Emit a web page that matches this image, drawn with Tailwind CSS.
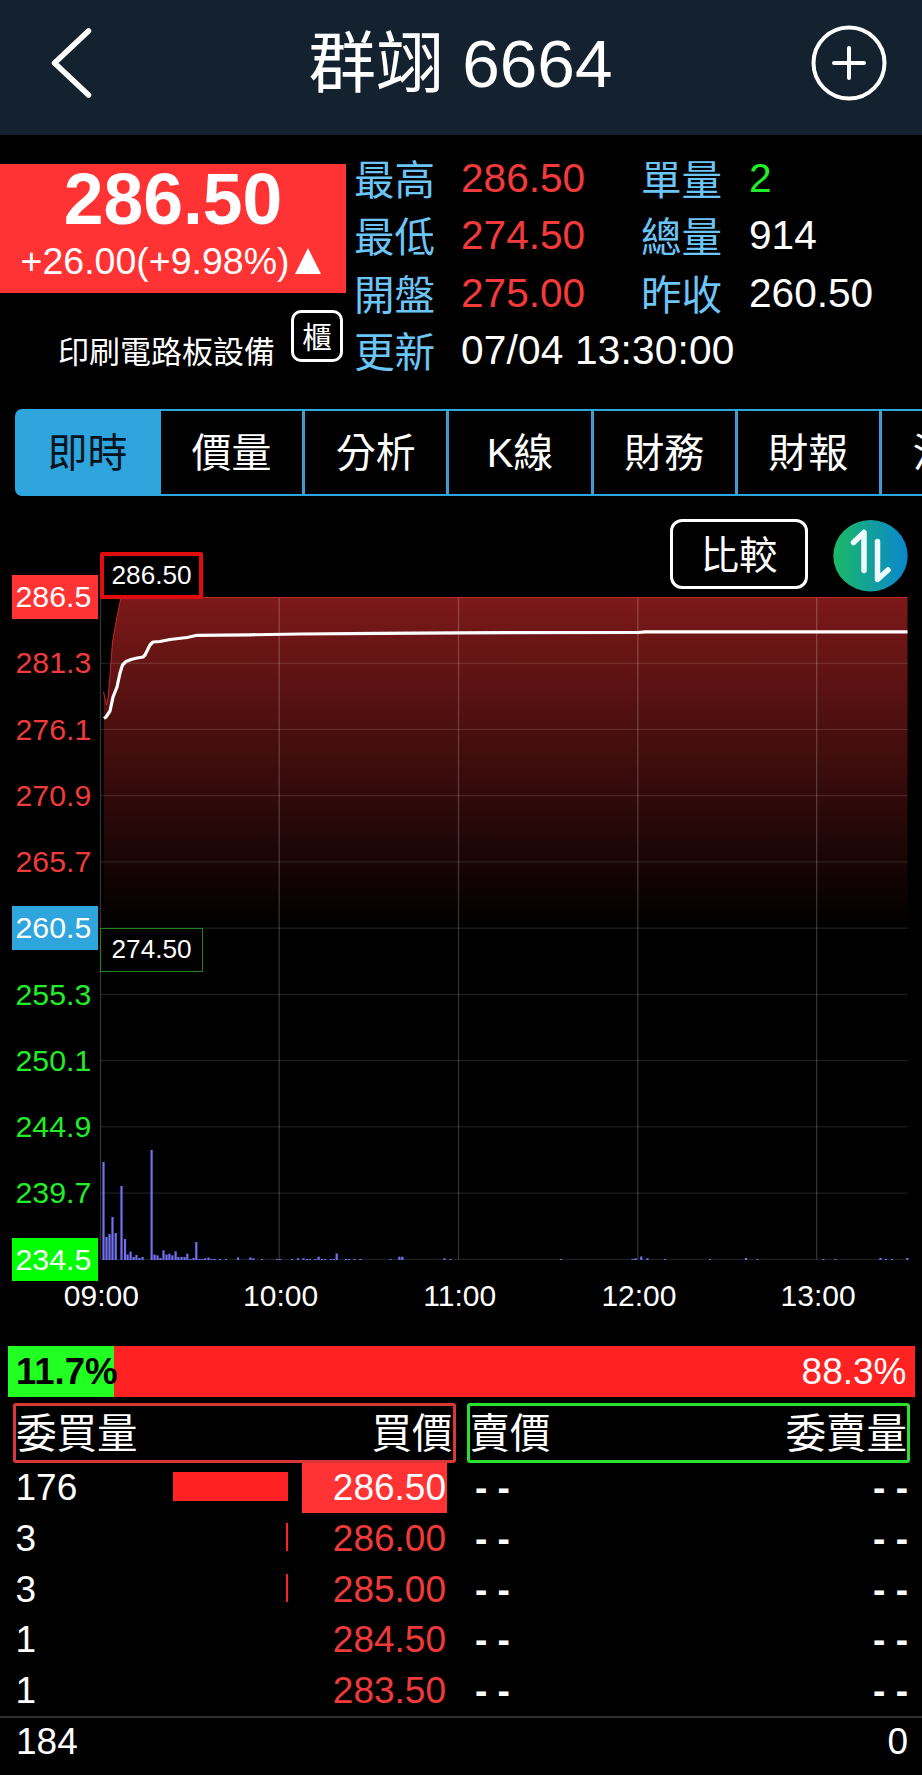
<!DOCTYPE html>
<html lang="zh-Hant">
<head>
  <meta charset="UTF-8" />
  <title>群翊 6664</title>
  <script src="https://cdn.jsdelivr.net/npm/@tailwindcss/browser@4"></script>
</head>
<body class="bg-black text-white w-[922px] h-[1775px] overflow-hidden font-['Liberation_Sans','Noto_Sans_CJK_TC',sans-serif]">
  <header class="h-[135px] bg-[#13222e] flex items-center justify-between pl-[46px] pr-[35px] pb-[10px]">
    <svg class="w-[76px] h-[76px]" viewBox="0 0 76 76" fill="none" stroke="white" stroke-width="5.500" stroke-linecap="round" stroke-linejoin="round">
      <path d="M42.500 6 L8.500 38 L42.500 70" />
    </svg>
    <h1 class="text-[67.500px] leading-[80px] whitespace-nowrap pt-[2px] pr-[12px]">群翊 6664</h1>
    <svg class="w-[76px] h-[76px]" viewBox="0 0 76 76" fill="none" stroke="white" stroke-width="4" stroke-linecap="round">
      <circle cx="38" cy="38" r="35.500" />
      <path d="M38 23 V53 M23 38 H53" />
    </svg>
  </header>

  <section class="h-[274px] flex pt-[14px]">
    <div class="w-[346px] mr-[8px] pt-[15px]">
      <div class="h-[129px] bg-[#ff3333] text-center">
        <div class="text-[71.500px] leading-[70px] font-bold">286.50</div>
        <div class="flex justify-center items-center text-[37.500px] leading-[54px] pr-[4px]">
          <span>+26.00(+9.98%)</span>
          <svg class="w-[26px] h-[26px] ml-[6px]" viewBox="0 0 26 26"><path d="M13 0 L26 26 H0 Z" fill="white" /></svg>
        </div>
      </div>
      <div class="flex justify-end pr-[3px] pt-[17px]">
        <span class="text-[31px] leading-[52px] pt-[17px] mr-[16px]">印刷電路板設備</span>
        <span class="w-[52px] h-[52px] border-3 border-white rounded-[10px] text-[29.500px] leading-[49px] text-center">櫃</span>
      </div>
    </div>
    <div class="grid grid-cols-[107px_180px_108px_160px] auto-rows-[57.400px] text-[40.600px] leading-[58px] whitespace-nowrap">
      <span class="text-[#6cc5f7] pt-[3px]">最高</span><span class="text-[#f43a3a]">286.50</span>
      <span class="text-[#6cc5f7] pt-[3px]">單量</span><span class="text-[#1fef25]">2</span>
      <span class="text-[#6cc5f7] pt-[3px]">最低</span><span class="text-[#f43a3a]">274.50</span>
      <span class="text-[#6cc5f7] pt-[3px]">總量</span><span>914</span>
      <span class="text-[#6cc5f7] pt-[3px]">開盤</span><span class="text-[#f43a3a]">275.00</span>
      <span class="text-[#6cc5f7] pt-[3px]">昨收</span><span>260.50</span>
      <span class="text-[#6cc5f7] pt-[3px]">更新</span><span class="col-span-3 tracking-[0.200px]">07/04 13:30:00</span>
    </div>
  </section>

  <nav class="ml-[15px] h-[87px] w-[1010px] flex border-2 border-[#2fa5dd] rounded-[7px] text-[40px] leading-[85px] text-center">
    <a class="w-[144px] shrink-0 bg-[#2fa5dd] text-[#04131d] pr-[3px]">即時</a>
    <a class="w-[144.200px] shrink-0 border-r-3 border-[#3f9dd0]">價量</a>
    <a class="w-[144.200px] shrink-0 border-r-3 border-[#3f9dd0]">分析</a>
    <a class="w-[144.200px] shrink-0 border-r-3 border-[#3f9dd0]">K線</a>
    <a class="w-[144.200px] shrink-0 border-r-3 border-[#3f9dd0]">財務</a>
    <a class="w-[144.200px] shrink-0 border-r-3 border-[#3f9dd0]">財報</a>
    <a class="w-[144.200px] shrink-0 pr-[3px]">法人</a>
  </nav>

  <section class="h-[766px] flex">
    <!-- price axis -->
    <div class="w-[98px] pl-[11.500px] pt-[79px] h-[785px] flex flex-col justify-between text-[30.300px] leading-[43.500px] *:h-[43.500px] *:pl-[4px]">
      <div class="bg-[#ff3333]">286.5</div>
      <div class="text-[#ee3b3b]">281.3</div>
      <div class="text-[#ee3b3b]">276.1</div>
      <div class="text-[#ee3b3b]">270.9</div>
      <div class="text-[#ee3b3b]">265.7</div>
      <div class="bg-[#2fa5dd]">260.5</div>
      <div class="text-[#22ee28]">255.3</div>
      <div class="text-[#22ee28]">250.1</div>
      <div class="text-[#22ee28]">244.9</div>
      <div class="text-[#22ee28]">239.7</div>
      <div class="bg-[#00ff00]">234.5</div>
    </div>
    <div class="relative w-[824px]">
      <div class="h-[101px] flex justify-end pt-[23px] pr-[14px]">
        <button class="w-[138px] h-[70px] border-3 border-white rounded-[12px] text-[38.500px] leading-[64px] pt-[2px] mr-[25px]">比較</button>
        <svg class="w-[75px] h-[73px]" viewBox="0 0 75 73" fill="none">
          <defs>
            <linearGradient id="swap"><stop offset="0" stop-color="#1bb965" /><stop offset="1" stop-color="#0a86cf" /></linearGradient>
          </defs>
          <ellipse cx="37.500" cy="36.800" rx="37.200" ry="35.700" fill="url(#swap)" />
          <path d="M20.500 23.500 L31 13.500 V51.500 M44.500 22.500 V60.500 L55 51" stroke="#eefaff" stroke-width="5.500" stroke-linecap="round" stroke-linejoin="round" />
        </svg>
      </div>
      <svg id="chart" class="block w-[824px] h-[665px]" viewBox="98 597 824 665" fill="none">
        <defs>
          <linearGradient id="area" x1="0" y1="597" x2="0" y2="928" gradientUnits="userSpaceOnUse">
            <stop offset="0" stop-color="#ff3333" stop-opacity=".49" />
            <stop offset="1" stop-color="#ff3333" stop-opacity="0" />
          </linearGradient>
        </defs>
        <path d="M104 928 V692 L106.500 705 L108 698 L110 676 L112.500 642 L116 622 L121 597 H907.500 V928 Z" fill="url(#area)" />
        <g id="grid" stroke="white"></g>
        <path d="M103.500 692 L106.500 705 L108 698 L110 676 L112.500 642 L116 622 L121 597.500 H907.500" stroke="#c42828" stroke-width="1" />
        <g id="volume" fill="#7171f2"></g>
        <path d="M104 718.500 L106 717 L110 711 L113 697 L117 687 L120 673 L122.500 665 L126 661.500 L131 659.500 L136 658.300 L143 657 L145 655 L150 645 L153 642 L160 641.500 L170 639.500 L187 637.500 L197 635.300 L250 634.800 L300 634 L380 633.300 L458 632.800 L638 632.500 L645 631.800 L907.500 631.800" stroke="white" stroke-width="3.200" stroke-linejoin="round" />
      </svg>
      <div class="absolute left-[2px] top-[56px] w-[103px] h-[47px] border-4 border-[#e30c0c] rounded-[2px] text-[26.200px] leading-[38px] pl-[7.500px]">286.50</div>
      <div class="absolute left-[2px] top-[432px] w-[103px] h-[44px] border-[1.500px] border-[#1f861f] text-[26.200px] leading-[41px] pl-[10.500px]">274.50</div>
    </div>
  </section>

  <div class="h-[84px] pl-[11.800px] pt-[14px] flex text-[30px] leading-[40px] text-center *:w-[179.200px]">
    <span>09:00</span><span>10:00</span><span>11:00</span><span>12:00</span><span>13:00</span>
  </div>

  <div class="mx-[7.500px] h-[51px] bg-[#ff2222] flex justify-between text-[37px] leading-[51px] pr-[8px]">
    <div class="w-[106.500px] bg-[#22ff22] text-black font-bold pl-[8.500px] text-[36.500px]">11.7%</div>
    <div>88.3%</div>
  </div>

  <div class="mt-[6px] pl-[13px] pr-[12px] flex justify-between text-[40.500px] leading-[56px] *:flex *:justify-between *:h-[60px] *:rounded-[3px]">
    <div class="w-[442.500px] border-3 border-[#da3838]"><span>委買量</span><span>買價</span></div>
    <div class="w-[443.500px] border-3 border-[#28e02e]"><span>賣價</span><span>委賣量</span></div>
  </div>

  <div id="book" class="text-[37px] leading-[49.500px]"></div>

  <footer class="-mt-[1px] border-t-2 border-[#303030] flex justify-between pl-[16px] pr-[14px] text-[37px] leading-[47px]">
    <span>184</span><span>0</span>
  </footer>

  <script>
    const rect = (x, y, w, h) => `<rect x="${x}" y="${y}" width="${w}" height="${h}" />`;

    let lines = "";
    for (let i = 0; i <= 10; i++) lines += `<path d="M101 ${597 + i * 66.23} H907.500" stroke-opacity=".15" />`;
    [100.5, 279.2, 458.5, 637.8, 816.7].forEach(x => lines += `<path d="M${x} 597 V1259.500" stroke-opacity=".2" stroke-width="1.300" />`);
    document.getElementById("grid").innerHTML = lines;

    // [x, height] of each minute's volume
    const volume = [
      [103.5, 98], [106.5, 23], [109.5, 26], [112.5, 43], [115.7, 27], [121.5, 74], [125, 21], [127.6, 5.5],
      [130.6, 8.5], [133.6, 3], [136.4, 5], [139.4, 2], [142.5, 3], [151.6, 110], [154.5, 5.5], [157.5, 4.7],
      [160.4, 2], [163.5, 9.7], [166.5, 5.5], [169.4, 6.3], [172.4, 4.7], [175.6, 8.7], [178.4, 3], [181.5, 3],
      [184.5, 3], [187.3, 6.3], [190.5, 1], [193.5, 2], [196.3, 18], [199.5, 1], [202.5, 1], [205.3, 1.7],
      [208.5, 2.5], [211.5, 1], [214.5, 1], [220, 1], [226, 1], [238, 2.5], [250.4, 2.5], [253.4, 1.7], [262, 1],
      [277, 1], [280, 1], [292, 1], [298, 1.7], [303.5, 1.7], [307, 1], [310, 1], [315.5, 1], [318.6, 3.3],
      [322, 1], [325, 1], [331, 1], [334, 1], [336.7, 6.5], [346, 1], [349, 1], [354.5, 1], [360.5, 1], [390.5, 1],
      [399.4, 3.3], [402.4, 3.3], [444.5, 1.7], [450.5, 1], [561, 1], [632.5, 1], [635.5, 1.8], [641.3, 3.5],
      [647.4, 1.8], [665, 1], [710, 1], [746, 2], [757.5, 1], [823.5, 1], [835.5, 1], [880.5, 2], [886, 1],
      [892, 1], [907.3, 2]
    ];
    document.getElementById("volume").innerHTML = volume.map(([x, h]) => rect(x - 1.1, 1260 - h, 2.2, h)).join("");

    const bids = [[176, "286.50", 115], [3, "286.00", 2], [3, "285.00", 2], [1, "284.50", 0], [1, "283.50", 0]];
    document.getElementById("book").innerHTML = bids.map(([qty, price, bar], i) => `
      <div class="flex h-[50.800px] pl-[15.500px] pr-[14px]">
        <span class="w-[142px]">${qty}</span>
        <span class="w-[130.500px] flex justify-end pt-[9px]"><i class="block h-[28.500px] bg-[#ff2222]" style="width:${bar}px"></i></span>
        <span class="ml-[14px] w-[144.500px] h-[50px] pr-[0.500px] text-right ${i === 0 ? "bg-[#ff3333]" : "text-[#f03a3a]"}">${price}</span>
        <span class="ml-[28.500px] grow font-bold">- -</span>
        <span class="font-bold">- -</span>
      </div>`).join("");
  </script>
</body>
</html>
